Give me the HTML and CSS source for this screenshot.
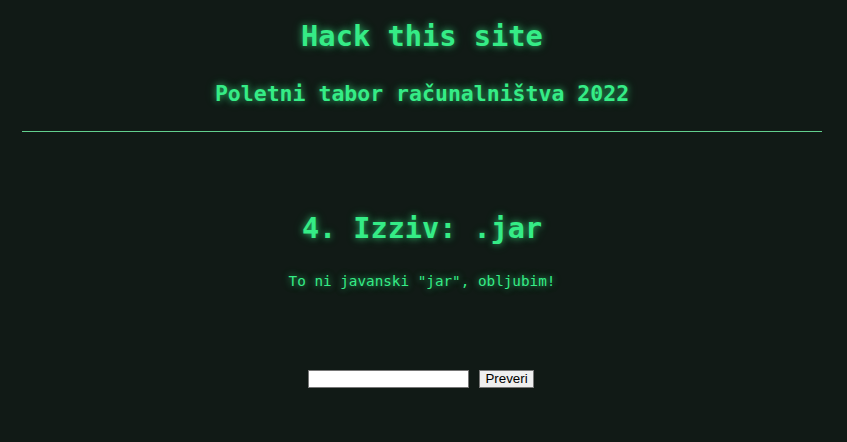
FILE: index.html
```html
<!DOCTYPE html>
<html lang="sl">
<head>
<meta charset="utf-8">
<title>Hack this site</title>
<link rel="stylesheet" href="styles.css">
</head>
<body>
<div class="page">
  <header class="header">
    <h1 class="title">Hack this site</h1>
    <h2 class="subtitle">Poletni tabor računalništva 2022</h2>
  </header>
  <hr class="rule">
  <main class="challenge">
    <h3 class="challenge-title">4. Izziv: .jar</h3>
    <p class="challenge-text">To ni javanski "jar", obljubim!</p>
    <form class="answer">
      <input class="answer-input" type="text">
      <button class="answer-button" type="button">Preveri</button>
    </form>
  </main>
</div>
</body>
</html>
```

FILE: styles.css
```css
html, body {
  margin: 0;
  padding: 0;
  background: #111a16;
}
body {
  font-family: "DejaVu Sans Mono", monospace;
  color: #35ec86;
}
.page {
  width: 800px;
  margin-left: 22px;
}
.header {
  display: flex;
  flex-direction: column;
  align-items: center;
  padding-top: 18px;
}
.title, .subtitle, .challenge-title, .challenge-text {
  font-weight: bold;
  text-align: center;
  margin: 0;
  text-shadow: 0 0 6px rgba(53, 236, 134, 0.6), 0 0 12px rgba(53, 236, 134, 0.3);
}
.title {
  font-size: 28.7px;
  line-height: 36px;
}
.subtitle {
  font-size: 21.5px;
  line-height: 30px;
  margin-top: 25px;
}
.rule {
  border: 0;
  height: 1px;
  background: #62d08e;
  margin: 22px 0 0 0;
}
.challenge {
  display: flex;
  flex-direction: column;
  align-items: center;
  padding-top: 79px;
}
.challenge-title {
  font-size: 28.5px;
  line-height: 36px;
}
.challenge-text {
  font-size: 14.3px;
  font-weight: normal;
  line-height: 18px;
  margin-top: 25px;
}
.answer {
  display: flex;
  gap: 10px;
  margin-top: 80px;
  margin-left: -2px;
}
.answer-input {
  width: 161px;
  height: 18px;
  box-sizing: border-box;
  border: 1px solid #767676;
  background: #fff;
  padding: 1px 2px;
  margin: 0;
}
.answer-button {
  width: 55px;
  height: 18px;
  box-sizing: border-box;
  border: 1px solid #767676;
  background: #efefef;
  font-family: "Liberation Sans", Arial, sans-serif;
  font-size: 13.33px;
  line-height: 14px;
  color: #000;
  padding: 0;
  margin: 0;
}
```
